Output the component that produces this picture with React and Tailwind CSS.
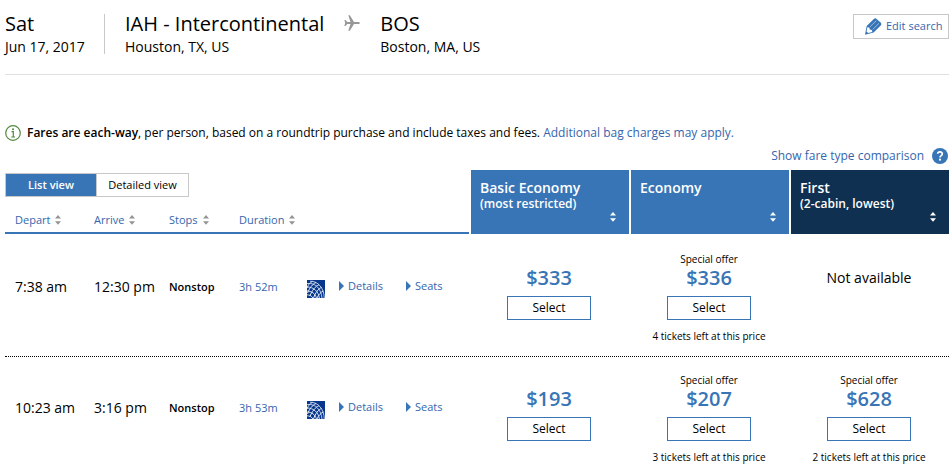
import { Fragment } from "react";

const FLIGHTS = [
  {
    depart: "7:38 am",
    arrive: "12:30 pm",
    duration: "3h 52m",
    fares: [
      { price: "$333" },
      { price: "$336", offer: "Special offer", left: "4 tickets left at this price" },
      null,
    ],
  },
  {
    depart: "10:23 am",
    arrive: "3:16 pm",
    duration: "3h 53m",
    fares: [
      { price: "$193" },
      { price: "$207", offer: "Special offer", left: "3 tickets left at this price" },
      { price: "$628", offer: "Special offer", left: "2 tickets left at this price" },
    ],
  },
];

const FARE_TYPES = [
  { name: "Basic Economy", note: "(most restricted)", bg: "bg-[#3875b6]" },
  { name: "Economy", note: "", bg: "bg-[#3875b6]" },
  { name: "First", note: "(2-cabin, lowest)", bg: "bg-[#103052]" },
];

const SORTS = ["Depart", "Arrive", "Stops", "Duration"];

function SortIcon() {
  return (
    <svg width="6" height="10" viewBox="0 0 6 10" fill="currentColor" aria-hidden="true">
      <path d="M3 0 6 3.600H0zM0 6.200h6L3 9.800z" />
    </svg>
  );
}

function PlaneIcon() {
  return (
    <svg width="16" height="16" viewBox="0 0 16 16" fill="#979797" aria-hidden="true">
      <path d="M15.900 8c0 .6-.9 1-2.200 1H10l-4.200 6.700H4.300L6.500 9H3.200L1.600 11H.4L1.200 8 .4 5h1.200l1.600 2h3.300L4.300.3h1.500L10 7h3.700c1.300 0 2.200.4 2.200 1z" />
    </svg>
  );
}

function PencilIcon() {
  return (
    <svg width="17" height="17" viewBox="0 0 17 17" aria-hidden="true">
      <path d="M8.800.9Q10.300-.5 11.700.9L15.600 4.600Q17 6 15.700 7.500L8.600 14.600 0 16.800 1.700 8z" fill="#3875b6" />
      <path d="M2.400 9.300 4.300 9.500 4.800 11.400 6.800 12 7.300 14 3.200 15.100 1.500 13.400z" fill="#fff" />
      <path d="M4.900 8.900 11.400 2.600M7.600 11.600 14 5.300" stroke="#fff" strokeWidth=".5" />
    </svg>
  );
}

function InfoIcon() {
  return (
    <svg width="16" height="16" viewBox="0 0 16 16" aria-hidden="true">
      <circle cx="8" cy="8" r="7.300" fill="none" stroke="#508a3c" strokeWidth="1.200" />
      <circle cx="8" cy="4.300" r="1" fill="#508a3c" />
      <path d="M6.500 6.700H8.300V11.800M6.300 12H10" fill="none" stroke="#508a3c" strokeWidth="1.200" />
    </svg>
  );
}

function HelpIcon() {
  return (
    <svg width="16" height="16" viewBox="0 0 16 16" aria-hidden="true">
      <circle cx="8" cy="8" r="8" fill="#3875b6" />
      <path d="M5.700 5.800C5.800 3.300 10.400 3.300 10.300 6 10.200 7.700 8 7.500 8 9.400" fill="none" stroke="#fff" strokeWidth="1.700" />
      <circle cx="8" cy="11.700" r="1.100" fill="#fff" />
    </svg>
  );
}

function AirlineLogo() {
  return (
    <svg width="18" height="18" viewBox="0 0 18 18" role="img" aria-label="United">
      <rect width="18" height="18" fill="#07378d" />
      <g fill="none" stroke="#e4ebf6">
        <path d="M3 1.200C11 1 17 8 17.300 18" strokeWidth=".8" />
        <path d="M0 3.500C9 2.500 14 9 15 18" strokeWidth=".8" />
        <path d="M0 7C6.500 7 11.300 11 12.400 18" strokeWidth=".9" />
        <path d="M0 11C4.500 11 8.300 13.500 9.400 18" strokeWidth=".9" />
        <path d="M0 14.800C2.500 14.800 5 16 5.800 18" strokeWidth=".9" />
        <path d="M5.500 1.300C3 2.500 1 5 0 8" strokeWidth=".9" />
        <path d="M9 2.500C5.500 4 2.500 8 .5 13" strokeWidth="1" />
        <path d="M12 4.700C8.500 6 5 10.500 2.800 16" strokeWidth="1" />
        <path d="M14.500 7.500C11.500 8.500 8.500 12.500 6.500 18" strokeWidth="1" />
        <path d="M16.300 11C14 12 11.500 14.500 10 18" strokeWidth="1" />
      </g>
    </svg>
  );
}

function Expander({ children }) {
  return (
    <button type="button" className="flex items-center gap-1 text-[11px] leading-5 text-[#3566ad]">
      <svg width="5" height="10" viewBox="0 0 5 10" fill="#3875b6" aria-hidden="true">
        <path d="M0 0 5 5 0 10z" />
      </svg>
      {children}
    </button>
  );
}

function Fare({ fare }) {
  if (!fare) return <div className="pt-[30px] text-sm leading-6">Not available</div>;
  return (
    <div className="flex flex-col items-center pt-[15px]">
      <div className="h-4 text-[10px] leading-4">{fare.offer}</div>
      <div className="text-xl leading-[22px] font-semibold text-[#3875b6]">{fare.price}</div>
      <button type="button" className="mt-[7px] h-6 w-[84px] border border-[#3875b6] bg-white text-xs">
        Select
      </button>
      <div className="mt-2 h-4 text-[10px] leading-4">{fare.left}</div>
    </div>
  );
}

export default function App() {
  return (
    <main className="bg-white pl-[5px] font-['Open_Sans',sans-serif] text-black">
      <header className="flex items-start border-b border-[#e0e0e0] pt-[14px] pb-5">
        <div className="h-10 w-[100px] border-r border-[#c8c8c8]">
          <div className="text-xl leading-5">Sat</div>
          <div className="pt-[3px] text-sm leading-5">Jun 17, 2017</div>
        </div>
        <div className="-mb-1 ml-5">
          <h1 className="text-xl leading-5">IAH - Intercontinental</h1>
          <div className="pt-[3px] text-sm leading-5">Houston, TX, US</div>
        </div>
        <div className="ml-5 pt-px">
          <PlaneIcon />
        </div>
        <div className="-mb-1 ml-5">
          <div className="text-xl leading-5">BOS</div>
          <div className="pt-[3px] text-sm leading-5">Boston, MA, US</div>
        </div>
        <button
          type="button"
          className="ml-auto flex h-[25px] w-24 items-center gap-1 border border-[#c8c8c8] pl-[11px] text-[11px] text-[#3566ad]"
        >
          <PencilIcon />
          Edit search
        </button>
      </header>

      <div className="mt-12 flex items-center gap-[6px] text-xs leading-5">
        <InfoIcon />
        <p>
          <strong className="font-semibold">Fares are each-way</strong>, per person, based on a roundtrip purchase and
          include taxes and fees.{" "}
          <a href="#bags" className="text-[#3566ad]">
            Additional bag charges may apply.
          </a>
        </p>
      </div>

      <div className="mt-[3px] mb-1 flex items-center justify-end gap-2 pr-px text-xs leading-5">
        <a href="#compare" className="text-[#3566ad]">
          Show fare type comparison
        </a>
        <button type="button" aria-label="Help">
          <HelpIcon />
        </button>
      </div>

      <table className="w-full table-fixed border-separate border-spacing-0 text-left">
        <colgroup>
          <col className="w-[79px]" />
          <col className="w-[75px]" />
          <col className="w-[70px]" />
          <col className="w-[69px]" />
          <col className="w-[37px]" />
          <col className="w-[67px]" />
          <col />
          <col className="w-40" />
          <col className="w-40" />
          <col className="w-40" />
        </colgroup>
        <thead>
          <tr>
            <td colSpan={7} className="h-9 pt-[3px] align-top">
              <div className="flex text-[11px]">
                <button
                  type="button"
                  className="h-6 w-[92px] border border-[#c8c8c8] bg-[#3875b6] font-semibold text-white"
                >
                  List view
                </button>
                <button type="button" className="h-6 w-[92px] border border-l-0 border-[#c8c8c8]">
                  Detailed view
                </button>
              </div>
            </td>
            {FARE_TYPES.map((type) => (
              <th key={type.name} rowSpan={2} className="pb-[2px] pl-[2px] align-top font-semibold text-white">
                <div className={`flex h-16 justify-between pt-[10px] pr-[13px] pb-3 pl-[9px] ${type.bg}`}>
                  <div>
                    <div className="text-sm leading-4">{type.name}</div>
                    <div className="text-xs leading-4">{type.note}</div>
                  </div>
                  <button type="button" aria-label={`Sort by ${type.name}`} className="self-end">
                    <SortIcon />
                  </button>
                </div>
              </th>
            ))}
          </tr>
          <tr>
            {SORTS.map((name) => (
              <th key={name} colSpan={name === "Duration" ? 4 : 1} className="pb-[2px] align-top font-normal">
                <div className="h-7 border-b-2 border-[#3875b6] pl-[10px]">
                  <button type="button" className="flex items-center gap-[5px] text-[11px] leading-7 text-[#3566ad]">
                    {name}
                    <span className="text-[#949494]">
                      <SortIcon />
                    </span>
                  </button>
                </div>
              </th>
            ))}
          </tr>
        </thead>
        <tbody>
          {FLIGHTS.map((flight, index) => (
            <Fragment key={flight.depart}>
              {index > 0 && (
                <tr aria-hidden="true">
                  <td colSpan={10} className="border-b border-dotted border-black" />
                </tr>
              )}
              <tr className="h-[120px] align-top">
                <td className="pt-[41px] pl-[10px] text-sm leading-5">{flight.depart}</td>
                <td className="pt-[41px] pl-[10px] text-sm leading-5">{flight.arrive}</td>
                <td className="pt-[41px] pl-[10px] text-[11px] leading-5 font-semibold">Nonstop</td>
                <td className="pt-[41px] pl-[10px] text-[11px] leading-5 text-[#3566ad]">{flight.duration}</td>
                <td className="pt-11 pl-[9px]">
                  <AirlineLogo />
                </td>
                <td className="pt-10 pl-1">
                  <Expander>Details</Expander>
                </td>
                <td className="pt-10 pl-1">
                  <Expander>Seats</Expander>
                </td>
                {flight.fares.map((fare, i) => (
                  <td key={FARE_TYPES[i].name} className="text-center">
                    <Fare fare={fare} />
                  </td>
                ))}
              </tr>
            </Fragment>
          ))}
        </tbody>
      </table>
    </main>
  );
}
